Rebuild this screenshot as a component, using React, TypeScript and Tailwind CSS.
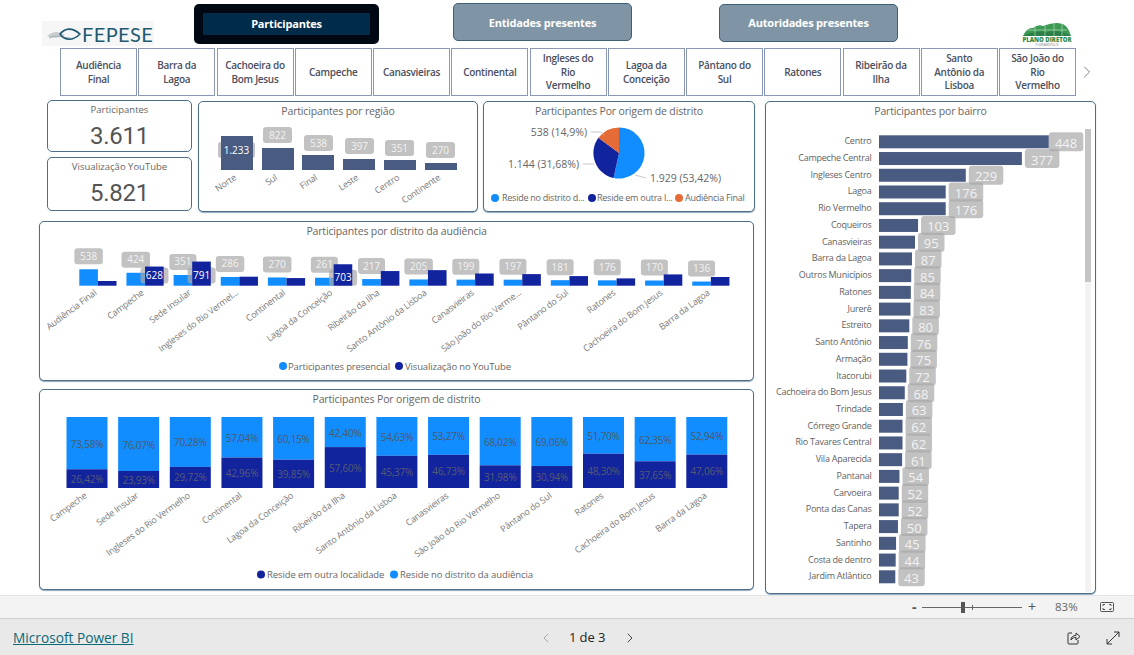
import { ChevronLeft, ChevronRight } from "lucide-react";

const slicers = [
  "Audiência Final",
  "Barra da Lagoa",
  "Cachoeira do Bom Jesus",
  "Campeche",
  "Canasvieiras",
  "Continental",
  "Ingleses do Rio Vermelho",
  "Lagoa da Conceição",
  "Pântano do Sul",
  "Ratones",
  "Ribeirão da Ilha",
  "Santo Antônio da Lisboa",
  "São João do Rio Vermelho",
];

const regioes = [
  { nome: "Norte", valor: "1.233", x: 221, top: 136, pill: 142, w: 37, px: 218, dark: true },
  { nome: "Sul", valor: "822", x: 262, top: 148, pill: 127, w: 29, px: 263, dark: false },
  { nome: "Final", valor: "538", x: 302, top: 155, pill: 135, w: 29, px: 304, dark: false },
  { nome: "Leste", valor: "397", x: 343, top: 159, pill: 138, w: 29, px: 345, dark: false },
  { nome: "Centro", valor: "351", x: 384, top: 160, pill: 140, w: 29, px: 385, dark: false },
  { nome: "Continente", valor: "270", x: 425, top: 163, pill: 142, w: 29, px: 426, dark: false },
];

const distritos = [
  { nome: "Audiência Final", p: 538, y: 154 },
  { nome: "Campeche", p: 424, y: 628 },
  { nome: "Sede Insular", p: 351, y: 791 },
  { nome: "Ingleses do Rio Vermel...", p: 286, y: 295 },
  { nome: "Continental", p: 270, y: 250 },
  { nome: "Lagoa da Conceição", p: 261, y: 703 },
  { nome: "Ribeirão da Ilha", p: 217, y: 480 },
  { nome: "Santo Antônio da Lisboa", p: 205, y: 510 },
  { nome: "Canasvieiras", p: 199, y: 400 },
  { nome: "São João do Rio Verme...", p: 197, y: 380 },
  { nome: "Pântano do Sul", p: 181, y: 315 },
  { nome: "Ratones", p: 176, y: 240 },
  { nome: "Cachoeira do Bom Jesus", p: 170, y: 370 },
  { nome: "Barra da Lagoa", p: 136, y: 285 },
];

const origens = [
  { nome: "Campeche", fora: 26.42 },
  { nome: "Sede Insular", fora: 23.93 },
  { nome: "Ingleses do Rio Vermelho", fora: 29.72 },
  { nome: "Continental", fora: 42.96 },
  { nome: "Lagoa da Conceição", fora: 39.85 },
  { nome: "Ribeirão da Ilha", fora: 57.6 },
  { nome: "Santo Antônio da Lisboa", fora: 45.37 },
  { nome: "Canasvieiras", fora: 46.73 },
  { nome: "São João do Rio Vermelho", fora: 31.98 },
  { nome: "Pântano do Sul", fora: 30.94 },
  { nome: "Ratones", fora: 48.3 },
  { nome: "Cachoeira do Bom Jesus", fora: 37.65 },
  { nome: "Barra da Lagoa", fora: 47.06 },
];

const bairros: [string, number][] = [
  ["Centro", 448],
  ["Campeche Central", 377],
  ["Ingleses Centro", 229],
  ["Lagoa", 176],
  ["Rio Vermelho", 176],
  ["Coqueiros", 103],
  ["Canasvieiras", 95],
  ["Barra da Lagoa", 87],
  ["Outros Municípios", 85],
  ["Ratones", 84],
  ["Jurerê", 83],
  ["Estreito", 80],
  ["Santo Antônio", 76],
  ["Armação", 75],
  ["Itacorubi", 72],
  ["Cachoeira do Bom Jesus", 68],
  ["Trindade", 63],
  ["Córrego Grande", 62],
  ["Rio Tavares Central", 62],
  ["Vila Aparecida", 61],
  ["Pantanal", 54],
  ["Carvoeira", 52],
  ["Ponta das Canas", 52],
  ["Tapera", 50],
  ["Santinho", 45],
  ["Costa de dentro", 44],
  ["Jardim Atlântico", 43],
];

const pct = (n: number) => n.toFixed(2).replace(".", ",") + "%";

function PillBox({ x, y, w, h }: { x: number; y: number; w: number; h: number }) {
  return <rect x={x} y={y} width={w} height={h} rx={3} fill="#a8a8a8" fillOpacity={0.7} />;
}

function PillText({ x, y, w, h, text, size = 10, white = false, dy = 3.5 }: { x: number; y: number; w: number; h: number; text: string; size?: number; white?: boolean; dy?: number }) {
  return (
    <text x={x + w / 2} y={y + h / 2 + dy} textAnchor="middle" fontSize={size} fill={white ? "#ffffff" : "#f2f2f2"}>
      {text}
    </text>
  );
}

function Axis({ x, y, text, angle = -36 }: { x: number; y: number; text: string; angle?: number }) {
  return (
    <text x={x} y={y} textAnchor="end" fontSize={9} letterSpacing={-0.2} fill="#7a7a7a" transform={`rotate(${angle} ${x} ${y})`}>
      {text}
    </text>
  );
}

function Panel({ title, className, children }: { title: string; className: string; children: React.ReactNode }) {
  return (
    <div className={`flex flex-col rounded-[5px] border border-[#4d6f8a] bg-white shadow-[0_1px_1px_rgba(77,111,138,0.6)] ${className}`}>
      <div className="h-[18px] pt-[2px] text-center text-[10.5px] leading-[15px] tracking-[-0.15px] text-[#666666]">{title}</div>
      {children}
    </div>
  );
}

function Kpi({ title, value, className }: { title: string; value: string; className: string }) {
  return (
    <div className={`flex flex-col items-center rounded-[5px] border border-[#4d6f8a] bg-white ${className}`}>
      <div className="mt-[2px] text-[9.5px] leading-[13px] text-[#666666]">{title}</div>
      <div className="mt-[6px] font-['Roboto',sans-serif] text-[24px] leading-[28px] tracking-[-0.3px] text-[#555555]">{value}</div>
    </div>
  );
}

function RegiaoChart() {
  return (
    <svg width={278} height={91} viewBox="199 120 278 91" className="block overflow-visible">
      {regioes.map((r) => (
        <PillBox key={r.nome} x={r.px} y={r.pill} w={r.w} h={16} />
      ))}
      {regioes.map((r) => (
        <g key={r.nome}>
          <rect x={r.x} y={r.top} width={32} height={170 - r.top} fill="#4a5b82" />
          <Axis x={r.x + 16} y={179} text={r.nome} angle={-34} />
        </g>
      ))}
      {regioes.map((r) => (
        <PillText key={r.nome} x={r.px} y={r.pill} w={r.w} h={16} text={r.valor} white={r.dark} />
      ))}
    </svg>
  );
}

function PieChart() {
  const cx = 619;
  const cy = 153;
  const rad = 25.6;
  const pt = (p: number) => {
    const a = p * 2 * Math.PI;
    return `${cx + rad * Math.sin(a)} ${cy - rad * Math.cos(a)}`;
  };
  const slice = (from: number, to: number) => `M${cx} ${cy} L${pt(from)} A${rad} ${rad} 0 ${to - from > 0.5 ? 1 : 0} 1 ${pt(to)} Z`;
  return (
    <svg width={270} height={91} viewBox="484 120 270 91" className="block overflow-visible">
      <path d={slice(0, 0.5342)} fill="#118dff" />
      <path d={slice(0.5342, 0.851)} fill="#12239e" />
      <path d={slice(0.851, 1)} fill="#e66c37" />
      <path d="M591 132 H601 L604 135 M583 164 H594 M635 175 L646 178" fill="none" stroke="#c8c8c8" strokeWidth={1} />
      <g fontSize={10.5} fill="#666666">
        <text x={587} y={136} textAnchor="end">538 (14,9%)</text>
        <text x={579} y={168} textAnchor="end">1.144 (31,68%)</text>
        <text x={650} y={182}>1.929 (53,42%)</text>
      </g>
      <circle cx={495} cy={198} r={4} fill="#118dff" />
      <circle cx={592} cy={198} r={4} fill="#12239e" />
      <circle cx={679} cy={198} r={4} fill="#e66c37" />
      <g fontSize={9} letterSpacing={-0.25} fill="#666666">
        <text x={502} y={201}>Reside no distrito d...</text>
        <text x={597} y={201}>Reside em outra l...</text>
        <text x={685} y={201}>Audiência Final</text>
      </g>
    </svg>
  );
}

function DistritoChart() {
  const base = 285.7;
  const k = 0.0305;
  const groupX = (i: number) => 79.3 + 47.15 * i;
  const destaque = (i: number) => ({ x: groupX(i) + 14, y: i === 5 ? 269.7 : 267.5, w: 28, h: 16 });
  return (
    <svg width={713} height={140} viewBox="40 240 713 140" className="block overflow-visible">
      {distritos.map((d, i) => (
        <g key={d.nome}>
          <rect x={groupX(i)} y={base - d.p * k} width={18.6} height={d.p * k} fill="#118dff" />
          <Axis x={groupX(i) + 18} y={294} text={d.nome} angle={-37} />
        </g>
      ))}
      {distritos.map((d, i) => {
        const w = d.p > 200 && i !== 2 && i !== 5 && i !== 6 ? 28.5 : 27;
        return <PillBox key={d.nome} x={groupX(i) + 9.3 - w / 2} y={base - d.p * k - 21} w={w} h={16} />;
      })}
      {distritos.map((d, i) => (d.y > 600 ? <PillBox key={d.nome} {...destaque(i)} /> : null))}
      {distritos.map((d, i) => (
        <rect key={d.nome} x={groupX(i) + 18.6} y={base - d.y * k} width={18.6} height={d.y * k} fill="#12239e" />
      ))}
      {distritos.map((d, i) => {
        const w = d.p > 200 && i !== 2 && i !== 5 && i !== 6 ? 28.5 : 27;
        return <PillText key={d.nome} x={groupX(i) + 9.3 - w / 2} y={base - d.p * k - 21} w={w} h={16} text={String(d.p)} />;
      })}
      {distritos.map((d, i) => (d.y > 600 ? <PillText key={d.nome} {...destaque(i)} text={String(d.y)} white /> : null))}
      <g fontSize={9.5} letterSpacing={-0.15} fill="#666666">
        <circle cx={283} cy={366} r={4} fill="#118dff" />
        <text x={288} y={369.5}>Participantes presencial</text>
        <circle cx={399} cy={366} r={4} fill="#12239e" />
        <text x={405} y={369.5}>Visualização no YouTube</text>
      </g>
    </svg>
  );
}

function OrigemChart() {
  const top = 417;
  const h = 71;
  return (
    <svg width={713} height={181} viewBox="40 408 713 181" className="block overflow-visible">
      {origens.map((o, i) => {
        const x = 66.5 + 51.65 * i;
        const hf = (o.fora / 100) * h;
        const split = top + h - hf;
        return (
          <g key={o.nome}>
            <rect x={x} y={top} width={41} height={h - hf} fill="#118dff" />
            <rect x={x} y={split} width={41} height={hf} fill="#12239e" />
            <text x={x + 20.5} y={(top + split) / 2 + 4.5} textAnchor="middle" fontSize={10} letterSpacing={-0.2} fill="#4f5a66">
              {pct(100 - o.fora)}
            </text>
            <text x={x + 20.5} y={(split + top + h) / 2 + 4} textAnchor="middle" fontSize={10} letterSpacing={-0.2} fill="#565a70">
              {pct(o.fora)}
            </text>
            <Axis x={x + 21} y={497} text={o.nome} />
          </g>
        );
      })}
      <g fontSize={9.5} letterSpacing={-0.1} fill="#666666">
        <circle cx={261} cy={574.5} r={4} fill="#12239e" />
        <text x={267} y={578}>Reside em outra localidade</text>
        <circle cx={394} cy={574.5} r={4} fill="#118dff" />
        <text x={400} y={578}>Reside no distrito da audiência</text>
      </g>
    </svg>
  );
}

function BairroChart() {
  return (
    <svg width={329} height={473} viewBox="766 120 329 473" className="block overflow-visible">
      <rect x={1085} y={129} width={6} height={463} fill="#f3f3f3" />
      <rect x={1085} y={129} width={6} height={153} fill="#c4c4c4" />
      {bairros.map(([nome, v], i) => {
        const y = 135.3 + 16.73 * i;
        return (
          <g key={nome}>
            <text x={871.5} y={y + 9} textAnchor="end" fontSize={9} letterSpacing={-0.25} fill="#5f5f5f">{nome}</text>
            <rect x={879} y={y} width={v * 0.379} height={13} fill="#4a5b82" />
          </g>
        );
      })}
      {bairros.map(([nome, v], i) => {
        const y = 135.3 + 16.73 * i - 3;
        const end = 879 + v * 0.379;
        const px = i === 0 ? end : end + 3;
        const w = v > 99 ? 34.5 : 26.5;
        return (
          <g key={nome}>
            <PillBox x={px} y={y} w={w} h={19} />
            <PillText x={px} y={y} w={w} h={19} text={String(v)} size={13} dy={6} />
          </g>
        );
      })}
    </svg>
  );
}

function FepeseLogo() {
  return (
    <div className="mt-[21px] ml-[42px] flex h-[25px] w-[112px] items-center bg-[#f6f6f6] pl-[5px]">
      <svg width={35} height={20} viewBox="0 0 35 20" className="shrink-0">
        <path d="M0 12 C8 6 12 8 18 11 C12 14 6 15 0 12 Z" fill="#c9cdd0" />
        <path d="M2 14 C10 10 16 14 24 14" fill="none" stroke="#9fb0ba" strokeWidth={1} />
        <path d="M13 10 C18 4 25 3 33 10 C26 17 18 17 13 10 Z" fill="none" stroke="#1d5a72" strokeWidth={1.6} />
      </svg>
      <span className="font-['Lato',sans-serif] text-[20px] leading-none tracking-[0.4px] text-[#1d5a72]">FEPESE</span>
    </div>
  );
}

function PlanoLogo() {
  return (
    <svg width={52} height={25} viewBox="0 0 52 25" className="mt-[22px] ml-[123px] shrink-0">
      <path d="M2 14 Q6 5 12 6 Q17 2 22 4 Q30 1 36 1 Q44 1 47 7 Q49 10 50 14 Z" fill="#3c9a55" />
      <path d="M2 14 Q14 8 26 10 Q38 7 50 14 Z" fill="#2c7f46" />
      <path d="M6 8 H46 M14 4 V14 M24 3 V14 M33 1 V14 M41 2 V14" stroke="#bfe0c6" strokeWidth={0.6} fill="none" />
      <text x={26} y={19.5} textAnchor="middle" fontSize={6} fontWeight={800} fill="#2d8a4c">PLANO DIRETOR</text>
      <text x={26} y={23.5} textAnchor="middle" fontSize={3} fill="#777777">FLORIANÓPOLIS</text>
    </svg>
  );
}

export default function App() {
  return (
    <div className="flex h-screen w-full flex-col overflow-hidden bg-white font-['Open_Sans',sans-serif]">
      {/* cabeçalho */}
      <div className="flex h-[48px] shrink-0">
        <FepeseLogo />
        <div className="mt-[4px] ml-[40px] flex h-[40px] w-[185px] items-center justify-center rounded-[5px] bg-[#000814] text-[11px] font-bold tracking-[-0.2px] text-white">
          <div className="flex h-[22px] w-[167px] items-center justify-center bg-[#002c4a] pt-[1px]">Participantes</div>
        </div>
        <div className="mt-[3px] ml-[74px] flex h-[38px] w-[179px] items-center justify-center rounded-[5px] border border-[#3f5f75] bg-[#7f95a6] pt-[3px] text-[11px] font-bold tracking-[-0.2px] text-white">Entidades presentes</div>
        <div className="mt-[4px] ml-[87px] flex h-[38px] w-[179px] items-center justify-center rounded-[5px] border border-[#3f5f75] bg-[#7f95a6] pt-[1px] text-[11px] font-bold tracking-[-0.2px] text-white">Autoridades presentes</div>
        <PlanoLogo />
      </div>

      {/* segmentação por distrito */}
      <div className="flex h-[48px] shrink-0 items-stretch gap-[1.25px] pl-[60px]">
        {slicers.map((s) => (
          <div key={s} className="flex w-[77px] shrink-0 items-center justify-center border border-[#8a98b6] px-[7px] pt-[1px] text-center text-[10px] leading-[13.5px] font-semibold tracking-[-0.3px] text-[#4b4f60]">
            {s}
          </div>
        ))}
        <ChevronRight className="h-[20px] w-[20px] self-center text-[#5a6a80]" strokeWidth={1} />
      </div>

      {/* painéis */}
      <div className="flex h-[499px] shrink-0 pt-[4px] pl-[39px]">
        <div className="flex w-[715px] shrink-0 flex-col">
          <div className="flex h-[112px] pl-[8px]">
            <div className="flex w-[145px] shrink-0 flex-col gap-[5px]">
              <Kpi title="Participantes" value="3.611" className="h-[52px]" />
              <Kpi title="Visualização YouTube" value="5.821" className="h-[54px]" />
            </div>
            <Panel title="Participantes por região" className="mt-px ml-[6px] h-[111px] w-[280px] shrink-0">
              <RegiaoChart />
            </Panel>
            <Panel title="Participantes Por origem de distrito" className="mt-px ml-[5px] h-[111px] w-[272px] shrink-0">
              <PieChart />
            </Panel>
          </div>
          <Panel title="Participantes por distrito da audiência" className="mt-[9px] h-[160px]">
            <DistritoChart />
          </Panel>
          <Panel title="Participantes Por origem de distrito" className="mt-[8px] h-[201px]">
            <OrigemChart />
          </Panel>
        </div>
        <Panel title="Participantes por bairro" className="mt-px ml-[11px] h-[493px] w-[331px]">
          <BairroChart />
        </Panel>
      </div>

      {/* barra de zoom */}
      <div className="flex h-[23px] shrink-0 items-center border-t border-[#e4e4e4] bg-[#f3f3f3] text-[#555555]">
        <span className="ml-[912px] w-[6px] text-[14px] leading-none font-bold">-</span>
        <div className="relative ml-[4px] h-px w-[100px] bg-[#666666]">
          <div className="absolute top-[-5px] left-[39px] h-[11px] w-[4px] bg-[#555555]" />
          <div className="absolute top-[-2px] left-[50px] h-[5px] w-px bg-[#666666]" />
        </div>
        <span className="ml-[6px] text-[14px] leading-none">+</span>
        <span className="ml-[19px] text-[11.5px] text-[#666666]">83%</span>
        <svg width={14} height={10} viewBox="0 0 14 10" fill="none" stroke="#555555" className="ml-[22px]">
          <rect x={0.5} y={0.5} width={13} height={9} rx={1} />
          <path d="M3 4 V2.5 H5 M11 4 V2.5 H9 M3 6 V7.5 H5 M11 6 V7.5 H9" />
        </svg>
      </div>

      {/* rodapé */}
      <div className="flex h-[37px] shrink-0 items-center border-t border-[#cfcfcf] bg-[#e9e9e9] pt-[2px]">
        <a href="#" className="ml-[13px] w-[120px] text-[13.7px] whitespace-nowrap text-[#0b6a78] underline">Microsoft Power BI</a>
        <ChevronLeft className="ml-[405px] h-[16px] w-[16px] text-[#a8a8a8]" strokeWidth={1.5} />
        <span className="ml-[15px] text-[13px] font-medium tracking-[-0.1px] text-[#222222]">1 de 3</span>
        <ChevronRight className="ml-[17px] h-[16px] w-[16px] text-[#444444]" strokeWidth={1.5} />
        <svg width={14} height={14} viewBox="0 0 14 14" fill="none" stroke="#333333" className="ml-[429px]">
          <path d="M5 2 H2 Q1 2 1 3 V12 Q1 13 2 13 H10 Q11 13 11 12 V9" />
          <path d="M4 9 C4 6 6 4.5 9 4.5 V2 L13 5.5 L9 9 V6.5 C7 6.5 5 7 4 9 Z" />
        </svg>
        <svg width={14} height={14} viewBox="0 0 14 14" fill="none" stroke="#333333" className="ml-[25px]">
          <path d="M1 13 L13 1 M8 1 H13 V6 M1 8 V13 H6" />
        </svg>
      </div>
    </div>
  );
}
